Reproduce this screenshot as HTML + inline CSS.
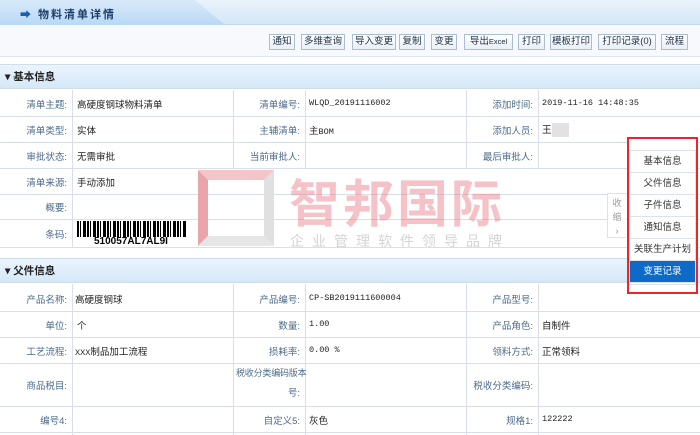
<!DOCTYPE html>
<html><head><meta charset="utf-8"><style>
*{margin:0;padding:0;box-sizing:border-box}
body{width:700px;height:435px;overflow:hidden;background:#fff;font-family:"Liberation Sans","Noto Sans CJK SC",sans-serif;font-size:10px;color:#333;position:relative}
.a{position:absolute}
.title{left:0;top:0;width:700px;height:25px;background:linear-gradient(#eaf3fc,#d3e6f8);border-bottom:1px solid #c7d9ec}
.tab{left:0;top:0;width:225px;height:25px;background:linear-gradient(#d8eafb,#b9d8f5);clip-path:polygon(0 0,195px 0,225px 25px,0 25px)}
.bar{left:0;top:25px;width:700px;height:32px;background:#f7f9fc;border-bottom:1px solid #dfe6ee}
.btn{position:absolute;top:34px;height:16px;border:1px solid #a9bdd3;background:linear-gradient(#fff,#e8eff7);font-size:9.5px;line-height:14px;text-align:center;color:#234;white-space:nowrap;overflow:hidden}
.sec{left:0;width:700px;height:25px;background:linear-gradient(#eaf4fd,#d5e8f8);border-top:1px solid #cfdde9;border-bottom:1px solid #cfdde9;font-weight:bold;font-size:10.5px;line-height:24px;padding-left:5px;color:#222}
.hl{position:absolute;left:0;width:700px;height:1px;background:#d8dfe8}
.vl{position:absolute;width:1px;background:#d8dfe8}
.l{position:absolute;text-align:right;color:#4d6b8a;font-size:9.5px;white-space:nowrap}
.v{position:absolute;font-size:9.5px;color:#222;white-space:nowrap}
.m{font-family:"Liberation Mono",monospace;font-size:8.5px}
.nav{position:absolute;left:630px;width:65px;height:22px;border-bottom:1px solid #dde3ea;background:#fff;text-align:center;font-size:9.5px;line-height:22px;color:#333;white-space:nowrap}
</style></head><body>
<div class="a title"></div><div class="a tab"></div>
<div class="a" style="left:20px;top:6px;font-size:11px;font-weight:bold;color:#1c3d66;letter-spacing:2px"><span style="color:#1a5fb0">➡</span> 物料清单详情</div>
<div class="a bar"></div>
<div class="btn" style="left:269px;width:26px">通知</div>
<div class="btn" style="left:301px;width:44px">多维查询</div>
<div class="btn" style="left:352px;width:44px">导入变更</div>
<div class="btn" style="left:399px;width:26px">复制</div>
<div class="btn" style="left:431px;width:26px">变更</div>
<div class="btn" style="left:464px;width:49px">导出<span style="font-size:7.5px">Excel</span></div>
<div class="btn" style="left:518px;width:27px">打印</div>
<div class="btn" style="left:550px;width:42px">模板打印</div>
<div class="btn" style="left:598px;width:58px">打印记录(0)</div>
<div class="btn" style="left:661px;width:27px">流程</div>

<div class="a sec" style="top:64px">▾ 基本信息</div>
<div class="hl" style="top:116px"></div><div class="hl" style="top:142px"></div><div class="hl" style="top:168px"></div><div class="hl" style="top:194px"></div><div class="hl" style="top:219px"></div><div class="hl" style="top:247px"></div>
<div class="vl" style="left:72px;top:90px;height:157px"></div>
<div class="vl" style="left:233px;top:90px;height:78px"></div>
<div class="vl" style="left:305px;top:90px;height:78px"></div>
<div class="vl" style="left:466px;top:90px;height:78px"></div>
<div class="vl" style="left:538px;top:90px;height:78px"></div>
<div class="l" style="left:0;width:67px;top:97px">清单主题:</div><div class="v" style="left:77px;top:97px">高硬度钢球物料清单</div>
<div class="l" style="left:233px;width:67px;top:97px">清单编号:</div><div class="v m" style="left:309px;top:98px">WLQD_20191116002</div>
<div class="l" style="left:466px;width:67px;top:97px">添加时间:</div><div class="v m" style="left:542px;top:98px">2019-11-16 14:48:35</div>
<div class="l" style="left:0;width:67px;top:123px">清单类型:</div><div class="v" style="left:77px;top:123px">实体</div>
<div class="l" style="left:233px;width:67px;top:123px">主辅清单:</div><div class="v" style="left:309px;top:123px">主<span class="m">BOM</span></div>
<div class="l" style="left:466px;width:67px;top:123px">添加人员:</div><div class="v" style="left:542px;top:122px">王<span style="display:inline-block;width:17px;height:14px;background:#e2e2e2;vertical-align:middle"></span></div>
<div class="l" style="left:0;width:67px;top:149px">审批状态:</div><div class="v" style="left:77px;top:149px">无需审批</div>
<div class="l" style="left:233px;width:67px;top:149px">当前审批人:</div>
<div class="l" style="left:466px;width:67px;top:149px">最后审批人:</div>
<div class="l" style="left:0;width:67px;top:175px">清单来源:</div><div class="v" style="left:77px;top:175px">手动添加</div>
<div class="l" style="left:0;width:67px;top:200px">概要:</div>
<div class="l" style="left:0;width:67px;top:227px">条码:</div>
<div class="a" style="left:77px;top:221px;width:110px;height:16px;background:repeating-linear-gradient(90deg,#000 0 2px,#fff 2px 3px,#000 3px 4px,#fff 4px 6px,#000 6px 9px,#fff 9px 10px)"></div>
<div class="a" style="left:94px;top:237px;font-size:10px;font-weight:bold;color:#000;line-height:10px">510057AL7AL9I</div>

<!-- watermark -->
<svg class="a" style="left:196px;top:168px" width="80" height="80"><polygon points="2,2 78,2 68,12 12,12" fill="#f3c5c8"/><polygon points="2,2 12,12 12,68 2,78" fill="#e9a6aa"/><polygon points="78,2 78,78 68,68 68,12" fill="#e0e0e0"/><polygon points="2,78 78,78 68,68 12,68" fill="#e6e6e6"/></svg>
<div class="a" style="left:289px;top:163px;font-size:51px;font-weight:bold;color:rgba(232,120,130,0.45);letter-spacing:3px;font-family:'Noto Sans CJK SC',sans-serif">智邦国际</div>
<div class="a" style="left:290px;top:231px;font-size:14px;color:#d4d4d4;letter-spacing:8px">企业管理软件领导品牌</div>

<div class="a sec" style="top:258px">▾ 父件信息</div>
<div class="hl" style="top:311px"></div><div class="hl" style="top:337px"></div><div class="hl" style="top:363px"></div><div class="hl" style="top:406px"></div><div class="hl" style="top:432px"></div>
<div class="vl" style="left:72px;top:284px;height:151px"></div>
<div class="vl" style="left:233px;top:284px;height:151px"></div>
<div class="vl" style="left:305px;top:284px;height:151px"></div>
<div class="vl" style="left:466px;top:284px;height:151px"></div>
<div class="vl" style="left:538px;top:284px;height:151px"></div>
<div class="l" style="left:0;width:67px;top:292px">产品名称:</div><div class="v" style="left:75px;top:292px">高硬度钢球</div>
<div class="l" style="left:233px;width:67px;top:292px">产品编号:</div><div class="v m" style="left:309px;top:293px">CP-SB2019111600004</div>
<div class="l" style="left:466px;width:67px;top:292px">产品型号:</div>
<div class="l" style="left:0;width:67px;top:318px">单位:</div><div class="v" style="left:77px;top:318px">个</div>
<div class="l" style="left:233px;width:67px;top:318px">数量:</div><div class="v m" style="left:309px;top:319px">1.00</div>
<div class="l" style="left:466px;width:67px;top:318px">产品角色:</div><div class="v" style="left:542px;top:318px">自制件</div>
<div class="l" style="left:0;width:67px;top:344px">工艺流程:</div><div class="v" style="left:75px;top:344px"><span class="m">XXX</span>制品加工流程</div>
<div class="l" style="left:233px;width:67px;top:344px">损耗率:</div><div class="v m" style="left:309px;top:345px">0.00 %</div>
<div class="l" style="left:466px;width:67px;top:344px">领料方式:</div><div class="v" style="left:542px;top:344px">正常领料</div>
<div class="l" style="left:0;width:67px;top:378px">商品税目:</div>
<div class="l" style="left:236px;width:68px;top:366px;font-size:9px;letter-spacing:-0.2px">税收分类编码版本</div>
<div class="l" style="left:233px;width:67px;top:385px">号:</div>
<div class="l" style="left:466px;width:67px;top:378px">税收分类编码:</div>
<div class="l" style="left:0;width:67px;top:413px">编号4:</div>
<div class="l" style="left:233px;width:67px;top:413px">自定义5:</div><div class="v" style="left:309px;top:413px">灰色</div>
<div class="l" style="left:466px;width:67px;top:413px">规格1:</div><div class="v m" style="left:542px;top:414px">122222</div>

<!-- side nav -->
<div class="a" style="left:607px;top:193px;width:19px;height:45px;border:1px solid #dde3ea;border-right:none;background:#fff;color:#999;font-size:9px;text-align:center;line-height:14px;padding-top:2px">收<br>缩<br>›</div>
<div class="a" style="left:627px;top:137px;width:71px;height:157px;border:2px solid #e8262b;background:#fff"></div>
<div class="a" style="left:629px;top:150px;width:67px;height:135px;border:1px solid #dde3ea;background:#fff"></div>
<div class="nav" style="top:151px">基本信息</div>
<div class="nav" style="top:173px">父件信息</div>
<div class="nav" style="top:195px">子件信息</div>
<div class="nav" style="top:217px">通知信息</div>
<div class="nav" style="top:239px">关联生产计划</div>
<div class="nav" style="top:261px;background:#0d6bc7;color:#fff">变更记录</div>
</body></html>
